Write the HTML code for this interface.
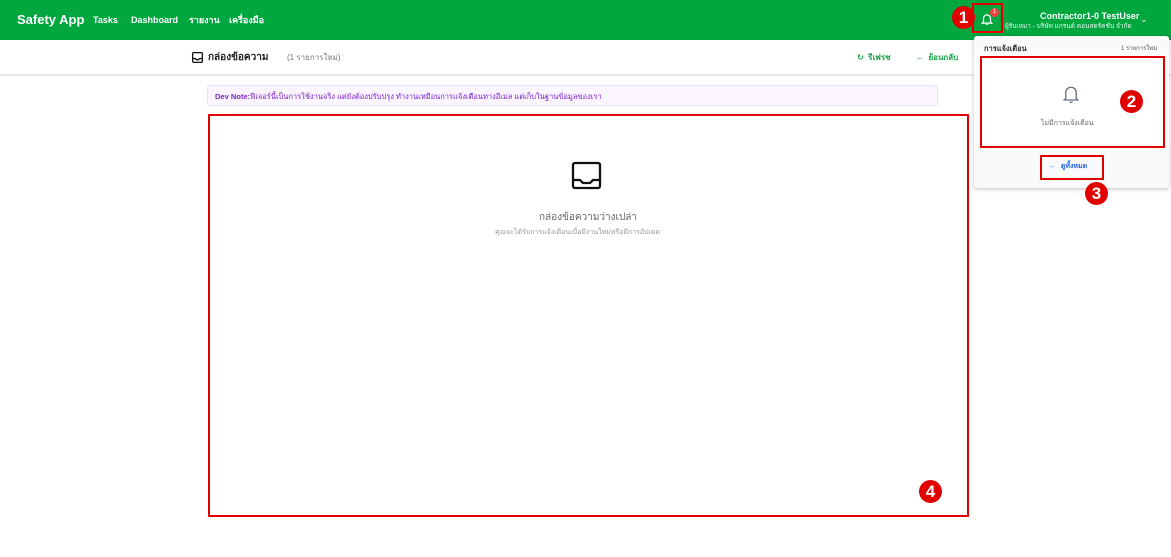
<!DOCTYPE html>
<html><head><meta charset="utf-8"><style>
*{box-sizing:border-box;margin:0;padding:0}
body{width:1171px;height:557px;overflow:hidden;background:#fff;font-family:"Liberation Sans","DejaVu Sans",sans-serif;position:relative;line-height:1}
.a{position:absolute;white-space:nowrap}
.hdr{left:0;top:0;width:1171px;height:40px;background:#00a63e}
.nav{color:#fff;font-weight:bold;font-size:9px;top:16px}
.rb{border:2px solid #e00000}
.badge{width:23px;height:23px;border-radius:50%;background:#e00000;color:#fff;font-size:17px;font-weight:bold;text-align:center;line-height:23px}
</style></head><body>
<div class="a hdr"></div>
<div class="a" style="left:17px;top:13px;color:#fff;font-weight:bold;font-size:13px">Safety App</div>
<div class="a nav" style="left:93px">Tasks</div>
<div class="a nav" style="left:131px">Dashboard</div>
<div class="a nav" style="left:189px;top:16px">รายงาน</div>
<div class="a nav" style="left:229px;top:16px">เครื่องมือ</div>
<div class="a rb" style="left:972px;top:3px;width:31px;height:30px"></div>
<svg class="a" style="left:980px;top:12px" width="14" height="14" viewBox="0 0 24 24" fill="none" stroke="#fff" stroke-width="2.2"><path d="M6 17V11a6 6 0 0 1 12 0v6l2 2H4z"/><path d="M10 21h4"/></svg>
<div class="a" style="left:990px;top:8px;width:9px;height:9px;border-radius:50%;background:#ef4444;color:#fff;font-size:6px;text-align:center;line-height:9px">1</div>
<div class="a badge" style="left:952px;top:6px">1</div>
<div class="a" style="left:1040px;top:12px;color:#fff;font-weight:bold;font-size:9px">Contractor1-0 TestUser</div>
<div class="a" style="left:1005px;top:24px;color:#e6f7ec;font-size:6.5px">ผู้รับเหมา - บริษัท แกรนด์ คอนสตรัคชั่น จำกัด</div>
<div class="a" style="left:1140px;top:15px;color:#fff;font-size:9px">⌄</div>
<div class="a" style="left:0;top:74px;width:1171px;height:2px;background:#e5e7eb"></div>
<svg class="a" style="left:191px;top:51px" width="13" height="13" viewBox="0 0 24 24" fill="none" stroke="#111" stroke-width="2.4"><rect x="3" y="3" width="18" height="18" rx="2"/><path d="M3 14h5l2 2h4l2-2h5"/></svg>
<div class="a" style="left:208px;top:53px;font-weight:bold;font-size:10px;color:#222">กล่องข้อความ</div>
<div class="a" style="left:287px;top:54px;font-size:8px;color:#777">(1 รายการใหม่)</div>
<div class="a" style="left:857px;top:54px;font-size:8px;color:#16a34a;font-weight:bold">↻ &nbsp;รีเฟรช</div>
<div class="a" style="left:916px;top:54px;font-size:8px;color:#16a34a;font-weight:bold">← &nbsp;ย้อนกลับ</div>
<div class="a" style="left:207px;top:85px;width:731px;height:21px;background:#faf5ff;border:1px solid #ede0fb;border-radius:3px"></div>
<div class="a" style="left:215px;top:93px;font-size:7.5px;color:#7e22ce"><b>Dev Note:</b>ฟีเจอร์นี้เป็นการใช้งานจริง แต่ยังต้องปรับปรุง ทำงานเหมือนการแจ้งเตือนทางอีเมล แต่เก็บในฐานข้อมูลของเรา</div>
<div class="a rb" style="left:208px;top:114px;width:761px;height:403px"></div>
<svg class="a" style="left:571px;top:161px" width="31" height="29" viewBox="0 0 31 29" fill="none" stroke="#111" stroke-width="2.3"><rect x="2" y="2" width="27" height="25" rx="2"/><path d="M2 19h7l3 3h7l3-3h7"/></svg>
<div class="a" style="left:539px;top:213px;font-size:10px;color:#666">กล่องข้อความว่างเปล่า</div>
<div class="a" style="left:495px;top:229px;font-size:7px;color:#999">คุณจะได้รับการแจ้งเตือนเมื่อมีงานใหม่หรือมีการอัปเดต</div>
<div class="a badge" style="left:919px;top:480px">4</div>
<div class="a" style="left:974px;top:36px;width:195px;height:152px;background:#f9fafb;box-shadow:0 1px 4px rgba(0,0,0,.25);border-radius:3px"></div>
<div class="a" style="left:974px;top:55px;width:195px;height:93px;background:#fff"></div>
<div class="a" style="left:984px;top:45px;font-size:7.5px;font-weight:bold;color:#333">การแจ้งเตือน</div>
<div class="a" style="left:1121px;top:46px;font-size:6px;color:#555">1 รายการใหม่</div>
<div class="a rb" style="left:980px;top:56px;width:185px;height:92px"></div>
<svg class="a" style="left:1062px;top:84px" width="18" height="20" viewBox="0 0 24 26" fill="none" stroke="#6b7280" stroke-width="1.8"><path d="M5 19V11a7 7 0 0 1 14 0v8l2 2H3z"/><path d="M10 24h4"/></svg>
<div class="a" style="left:1041px;top:120px;font-size:7px;color:#666">ไม่มีการแจ้งเตือน</div>
<div class="a rb" style="left:1040px;top:155px;width:64px;height:25px"></div>
<div class="a" style="left:1048px;top:163px;font-size:7px;color:#2563eb;font-weight:bold">→ &nbsp;&nbsp;ดูทั้งหมด</div>
<div class="a badge" style="left:1120px;top:90px">2</div>
<div class="a badge" style="left:1085px;top:182px">3</div>
</body></html>
